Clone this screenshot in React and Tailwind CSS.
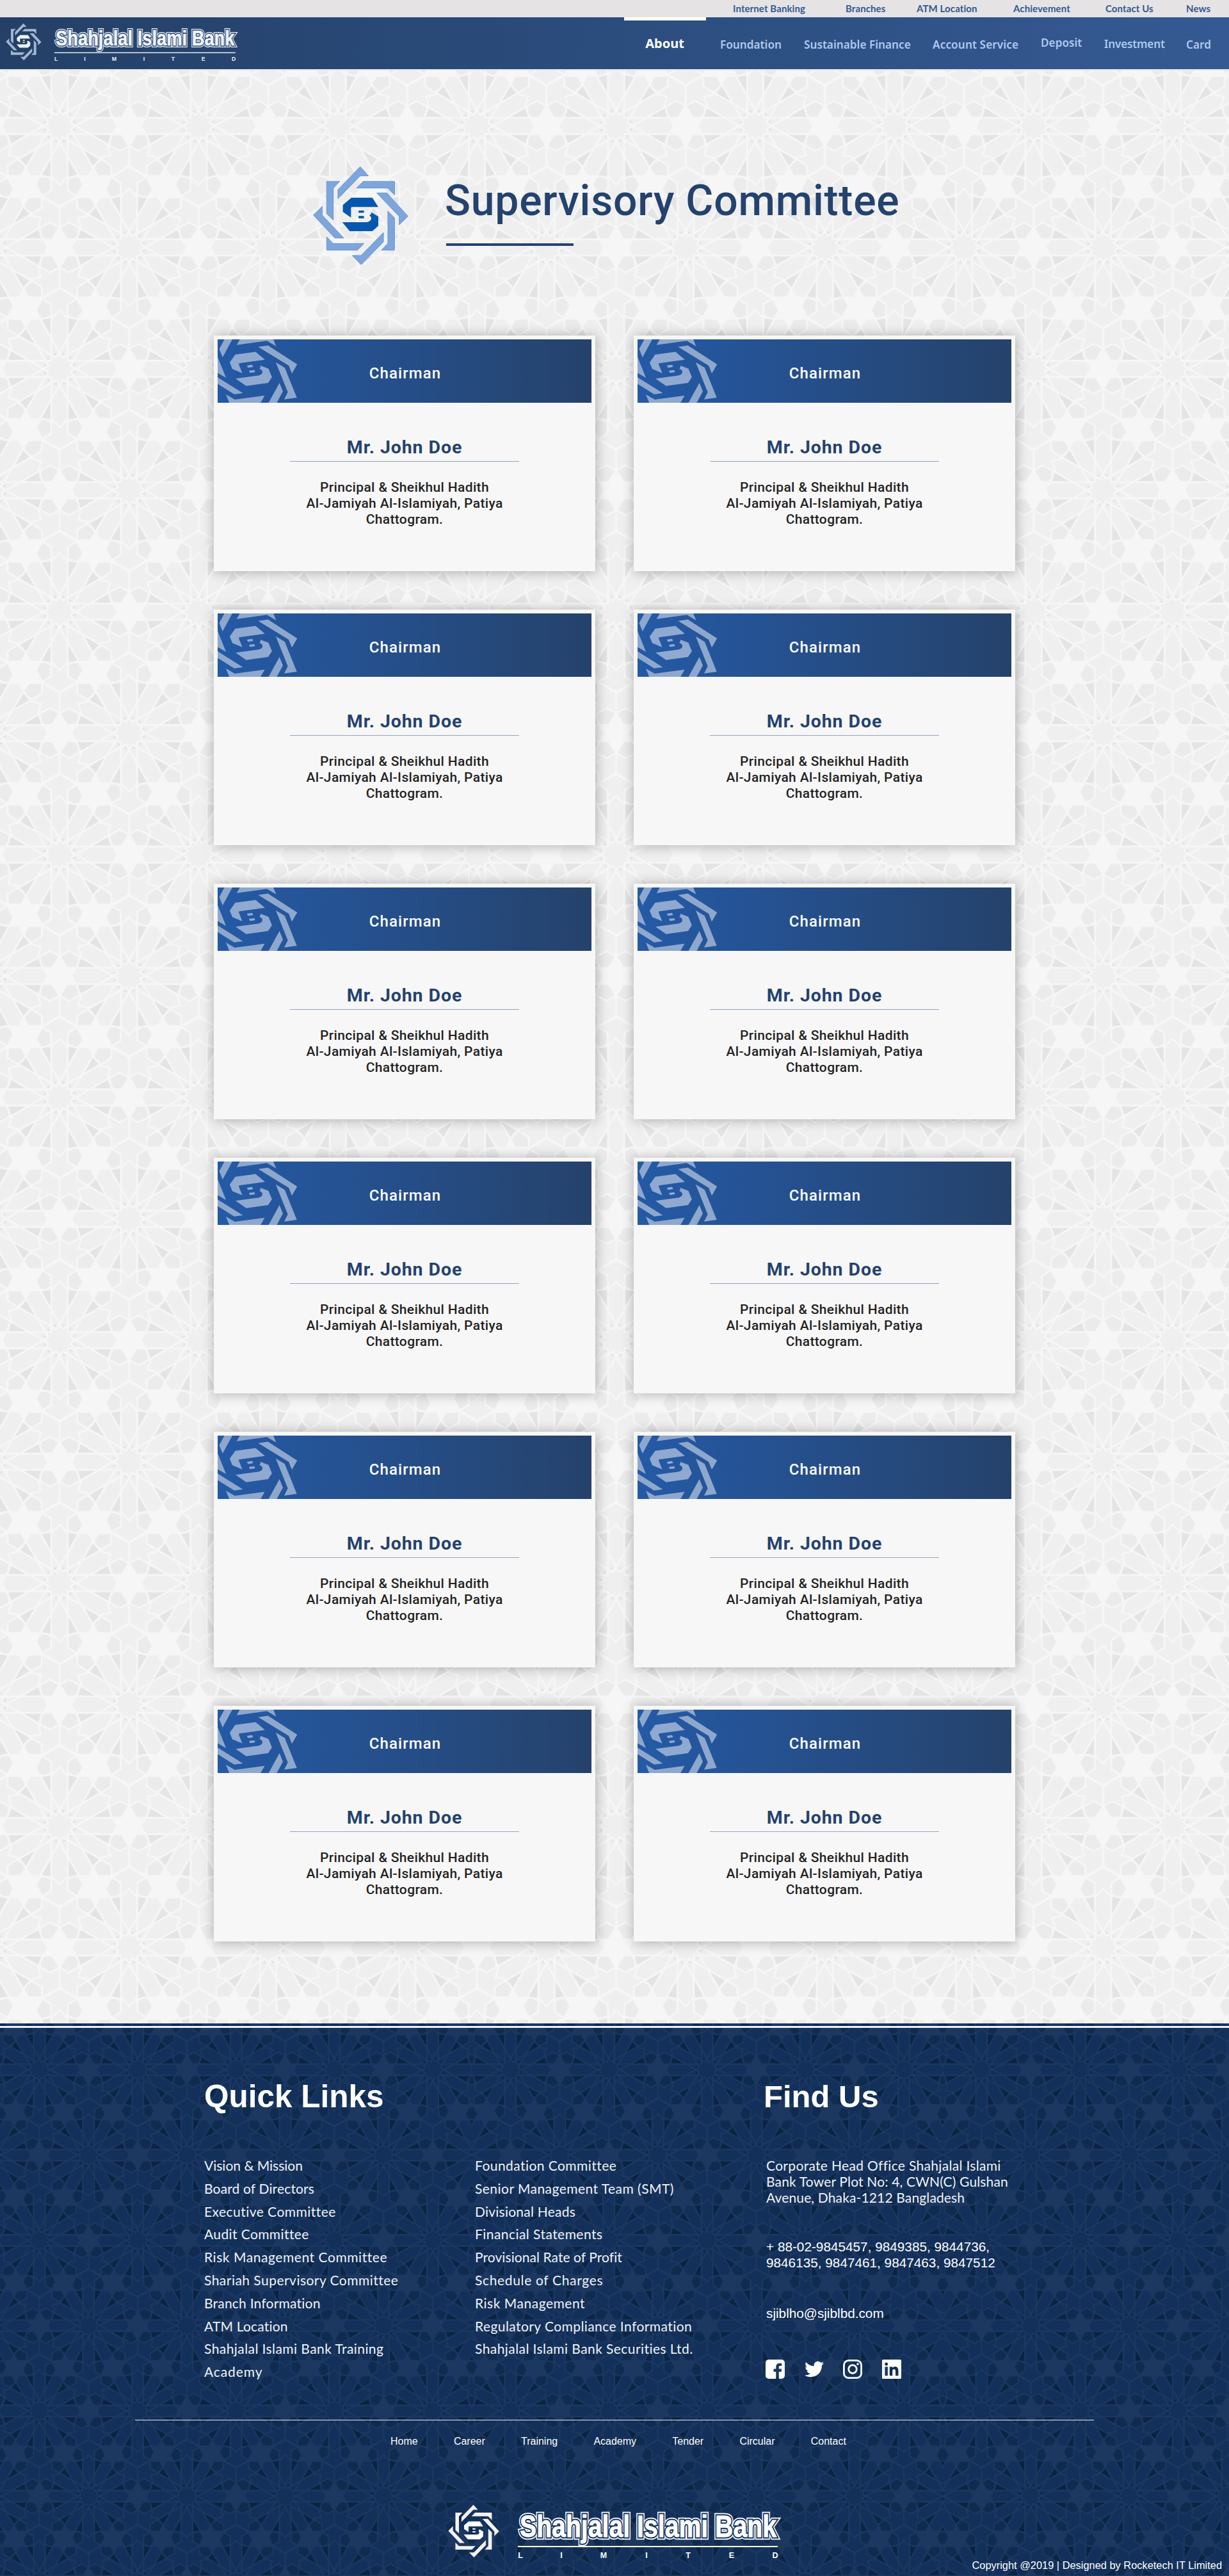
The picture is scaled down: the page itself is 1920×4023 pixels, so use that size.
import { FaTwitter } from 'react-icons/fa';

const SIXTHS = [0, 60, 120, 180, 240, 300];
const TWELFTHS = [0, 30, 60, 90, 120, 150, 180, 210, 240, 270, 300, 330];
const CENTERS = [
  [0, 0],
  [652, 0],
  [0, 1138],
  [652, 1138],
  [326, 569],
];

/* Twelve-fold star lattice used behind the page and the footer. */
function Lattice({ id, transform, base, line, dark, pent }) {
  return (
    <defs>
      <g id={`${id}-fills`}>
        {SIXTHS.map((a) => (
          <g key={a} transform={`rotate(${a})`}>
            <g fill={pent}>
              <path d="M250 38L237 62L235 92L282 117L328 92L306 45Z" />
              <path d="M250 38L237 62L235 92L282 117L328 92L306 45Z" transform="rotate(30) scale(1 -1) rotate(-30)" />
            </g>
            <g fill={dark}>
              <path d="M146 39L238 41L235 60L222 83Z" />
              <path d="M146 39L238 41L235 60L222 83Z" transform="rotate(30) scale(1 -1) rotate(-30)" />
            </g>
          </g>
        ))}
        {TWELFTHS.map((a) => (
          <path key={a} d="M60 16L74 8V24ZM60 16L52 14L58 6Z" fill={dark} transform={`rotate(${a})`} />
        ))}
      </g>
      <g id={`${id}-lines`} fill="none" stroke={line} strokeWidth="9">
        {TWELFTHS.map((a) => (
          <path key={a} d="M38 38H250M38 -38H250" transform={`rotate(${a})`} />
        ))}
        {SIXTHS.map((a) => (
          <g key={a} transform={`rotate(${a})`}>
            <path d="M250 38L237 62L235 92L282 117L328 92M326 92V190" />
            <path d="M250 38L237 62L235 92L282 117L328 92M326 92V190" transform="rotate(30) scale(1 -1) rotate(-30)" />
            <path d="M235 38L276 0L235 -38" transform="rotate(30)" />
            <path
              fill={line}
              stroke="none"
              d="M266 0L242 -43H289L326 -103L363 -43H410L386 0L410 43H363L326 103L289 43H242Z"
            />
          </g>
        ))}
        <circle r="44" fill={base} stroke="none" />
      </g>
      <pattern id={id} width="652" height="1138" patternUnits="userSpaceOnUse" patternTransform={transform}>
        <rect width="652" height="1138" fill={base} />
        {CENTERS.map(([x, y]) => (
          <use key={`f${x}-${y}`} href={`#${id}-fills`} x={x} y={y} />
        ))}
        {CENTERS.map(([x, y]) => (
          <use key={`l${x}-${y}`} href={`#${id}-lines`} x={x} y={y} />
        ))}
      </pattern>
    </defs>
  );
}

function Emblem({ ring, core, outline = 'none', ...rest }) {
  return (
    <g {...rest}>
      <g fill={ring} stroke={outline} strokeWidth="3">
        <path d="M278 31L317 74H278L174 181V139Z" />
        <path d="M292 100H439V163L407 131H261Z" />
        <path d="M356 154H403L502 263L461 303V264Z" />
        <path d="M408 239L439 271V422H378L408 390Z" />
        <path d="M387 340V383L283 490L241 447H282Z" />
        <path d="M121 360L152 391H296L265 422H121Z" />
        <path d="M100 217V258L201 365H159L59 258Z" />
        <path d="M121 100H182L152 132V281L121 251Z" />
      </g>
      <g fill={core}>
        <path d="M237 176H335L363 220H240Q235 220 235 226V269L197 243V210Z" />
        <path d="M194 291H308Q330 287 330 272Q330 264 321 260Q330 254 332 245L363 265V308L335 333H229Z" />
        <rect x="270" y="236" width="26" height="11" rx="3" />
        <rect x="270" y="262" width="26" height="11" rx="3" />
      </g>
    </g>
  );
}

const LETTERS = [
  ['L', 113],
  ['I', 177],
  ['M', 243],
  ['I', 310],
  ['T', 375],
  ['E', 443],
  ['D', 511],
];

function BankLogo({ id, className, ring, ink, gap }) {
  return (
    <svg viewBox="0 0 518 84" preserveAspectRatio="none" className={className}>
      <defs>
        <text
          id={id}
          x="112"
          y="50.5"
          textLength="401"
          lengthAdjust="spacingAndGlyphs"
          className="font-['Liberation_Sans',sans-serif] text-[48px] font-bold"
        >
          Shahjalal Islami Bank
        </text>
      </defs>
      <Emblem ring={ring} core={ink} transform="translate(-10.2 -4.8) scale(0.179)" />
      <use href={`#${id}`} fill={ink} stroke={ink} strokeWidth="8.5" />
      <use href={`#${id}`} fill={gap} stroke={gap} strokeWidth="5" />
      <use href={`#${id}`} fill={ink} stroke={ink} strokeWidth="0.8" />
      <rect x="109" y="65" width="406" height="2" fill={ink} />
      {LETTERS.map(([l, x]) => (
        <text
          key={x}
          x={x}
          y="83.5"
          fill={ink}
          textAnchor="middle"
          className="font-['Liberation_Sans',sans-serif] text-[12.5px] font-bold"
        >
          {l}
        </text>
      ))}
    </svg>
  );
}

const topLinks = [
  ['Internet Banking', 'w-[176px]'],
  ['Branches', 'w-[111px]'],
  ['ATM Location', 'w-[151px]'],
  ['Achievement', 'w-[144px]'],
  ['Contact Us', 'w-[126px]'],
  ['News', 'w-[67px]'],
];

const navLinks = [
  ['Foundation', 'w-[131px] mt-0.5'],
  ['Sustainable Finance', 'w-[201px] mt-0.5'],
  ['Account Service', 'w-[169px] mt-0.5 tracking-[0.1px]'],
  ['Deposit', 'w-[99px] -mt-px'],
  ['Investment', 'w-[128px] mt-px tracking-[-0.2px]'],
  ['Card', 'w-[67px] mt-0.5'],
];

function Header() {
  return (
    <header className="relative border-b-2 border-[#e9e9e9]">
      <nav className="flex h-[27px] justify-end bg-[#e5e3e4] font-[Lato,sans-serif] text-[15px] leading-[27px] font-bold tracking-[0.1px] whitespace-nowrap text-[#35588f]">
        {topLinks.map(([label, cls]) => (
          <a key={label} className={cls}>
            {label}
          </a>
        ))}
      </nav>
      <div className="flex h-[81px] items-start bg-linear-to-r from-[#244067] via-[#2b4d7e] to-[#355a93]">
        <BankLogo
          id="wordmark-top"
          className="mt-[9px] ml-[9px] h-[59px] w-[361px] overflow-visible"
          ring="#a3b7d3"
          ink="#eff4fb"
          gap="#25426a"
        />
        <div className="ml-auto flex font-['Noto_Sans',sans-serif] text-[17.2px] leading-[81px] font-semibold whitespace-nowrap text-[#afc9ef]">
          <a className="mr-[22px] flex h-[81px] w-32 flex-col items-center text-xl font-bold text-white">
            <span className="h-[5px] w-full bg-white" />
            <span className="-mt-[5px] pr-px leading-[81px]">About</span>
          </a>
          {navLinks.map(([label, cls]) => (
            <a key={label} className={cls}>
              {label}
            </a>
          ))}
        </div>
      </div>
    </header>
  );
}

function Card() {
  return (
    <article className="flex h-[368px] flex-col items-center bg-[#f7f7f7] p-1.5 font-[Roboto,sans-serif] shadow-[1px_1px_18px_rgba(0,0,0,0.3)]">
      <div className="relative flex h-[99px] w-full items-center justify-center overflow-hidden bg-linear-to-r from-[#245aa6] to-[#25426b]">
        <svg className="absolute inset-0 h-full w-full" viewBox="0 0 584 99">
          <g transform="matrix(0.972 -0.133 0.374 0.929 51.4 47.3)">
            <Emblem ring="#8ea8cd" core="#8fa9d1" transform="scale(0.3333) translate(-279 -258)" />
          </g>
        </svg>
        <h3 className="relative pt-1.5 pl-0.5 text-[24px] leading-7 font-medium tracking-[1.1px] text-white">Chairman</h3>
      </div>
      <h2 className="mt-[52px] text-[28.5px] leading-9 font-bold tracking-[0.9px] text-[#24426e]">Mr. John Doe</h2>
      <div className="mt-[3px] h-px w-[358px] bg-[#94a3c0]" />
      <p className="mt-7 text-center text-[21px] leading-[25px] font-medium tracking-[0.35px] text-[#222222]">
        Principal &amp; Sheikhul Hadith
        <br />
        Al-Jamiyah Al-Islamiyah, Patiya
        <br />
        Chattogram.
      </p>
    </article>
  );
}

const quickA = [
  ['Vision & Mission', 'tracking-[0px]'],
  ['Board of Directors', 'tracking-[0.15px]'],
  ['Executive Committee', 'tracking-[0.46px]'],
  ['Audit Committee', 'tracking-[0.39px]'],
  ['Risk Management Committee', 'tracking-[0.56px]'],
  ['Shariah Supervisory Committee', 'tracking-[0.47px]'],
  ['Branch Information', 'tracking-[0.22px]'],
  ['ATM Location', 'tracking-[0.18px]'],
  ['Shahjalal Islami Bank Training', 'tracking-[0.43px]'],
  ['Academy', 'tracking-[0.9px]'],
];

const quickB = [
  ['Foundation Committee', 'tracking-[0.44px]'],
  ['Senior Management Team (SMT)', 'tracking-[0.46px]'],
  ['Divisional Heads', 'tracking-[0.23px]'],
  ['Financial Statements', 'tracking-[0.45px]'],
  ['Provisional Rate of Profit', 'tracking-[0.07px]'],
  ['Schedule of Charges', 'tracking-[0.66px]'],
  ['Risk Management', 'tracking-[0.52px]'],
  ['Regulatory Compliance Information', 'tracking-[0.43px]'],
  ['Shahjalal Islami Bank Securities Ltd.', 'tracking-[0.43px]'],
];

function LinkList({ items }) {
  return (
    <ul className="w-[423px] font-[Lato,sans-serif] text-[21px] leading-[35.8px] whitespace-nowrap text-[#f1f3f6]">
      {items.map(([label, cls]) => (
        <li key={label} className={cls}>
          {label}
        </li>
      ))}
    </ul>
  );
}

function Social() {
  return (
    <div className="mt-[60px] flex gap-[30.5px] text-white">
      <svg className="size-[30px]" viewBox="0 0 30 30" fill="currentColor">
        <path d="M5 0H25A5 5 0 0 1 30 5V25A5 5 0 0 1 25 30H20.8V19H24.6L25.2 14.6H20.8V12C20.8 10.6 21.4 9.8 23 9.8H25.3V6C24.6 5.9 23.3 5.8 22 5.8C18.6 5.8 16.3 7.8 16.3 11.5V14.6H12.5V19H16.3V30H5A5 5 0 0 1 0 25V5A5 5 0 0 1 5 0Z" />
      </svg>
      <FaTwitter className="size-[30px]" />
      <svg className="size-[30px]" viewBox="0 0 30 30" fill="none" stroke="currentColor">
        <rect x="1.4" y="1.4" width="27.2" height="27.2" rx="7.4" strokeWidth="2.8" />
        <circle cx="15" cy="15" r="6.3" strokeWidth="2.8" />
        <circle cx="23" cy="7" r="1.8" fill="currentColor" stroke="none" />
      </svg>
      <svg className="size-[30px]" viewBox="0 0 30 30" fill="currentColor" fillRule="evenodd">
        <path d="M1.5 0H28.5A1.5 1.5 0 0 1 30 1.5V28.5A1.5 1.5 0 0 1 28.5 30H1.5A1.5 1.5 0 0 1 0 28.5V1.5A1.5 1.5 0 0 1 1.5 0ZM4.4 11.3V25.3H8.9V11.3ZM6.65 4.4A2.5 2.5 0 1 0 6.65 9.4A2.5 2.5 0 1 0 6.65 4.4ZM11.8 11.3V25.3H16.2V18.3C16.2 16.4 17 15 18.8 15C20.5 15 21 16.4 21 18.3V25.3H25.5V17.4C25.5 13.5 23.8 11 20.3 11C18.2 11 16.8 12 16.1 13.2V11.3Z" />
      </svg>
    </div>
  );
}

function Footer() {
  return (
    <footer className="relative h-[863px] overflow-hidden bg-[#12305a]">
      <svg className="absolute inset-0 h-full w-full">
        <Lattice
          id="lattice-navy"
          transform="translate(61.5 72.4) scale(0.2356 0.2341)"
          base="#12305a"
          line="#1c3861"
          dark="#0a2443"
          pent="#0f2b50"
        />
        <rect width="736" height="863" fill="url(#lattice-navy)" />
        <rect width="736" height="863" fill="url(#lattice-navy)" transform="translate(736 0)" />
        <rect width="448" height="863" fill="url(#lattice-navy)" transform="translate(1472 0)" />
      </svg>
      <div className="relative flex flex-col">
        <div className="mt-1 h-[3px] bg-[#f3f1f6]" />
        <div className="mt-[82px] flex h-[473px] pl-[319px]">
          <section className="w-[874px]">
            <h2 className="font-['Liberation_Sans',sans-serif] text-[49.5px] leading-[50px] font-bold text-white">Quick Links</h2>
            <div className="mt-[65px] flex">
              <LinkList items={quickA} />
              <LinkList items={quickB} />
            </div>
          </section>
          <section className="whitespace-nowrap text-white">
            <h2 className="font-['Liberation_Sans',sans-serif] text-[49px] leading-[50px] font-bold">Find Us</h2>
            <div className="pl-[4px]">
              <p className="mt-[70px] font-[Lato,sans-serif] text-[21px] leading-[25px] text-[#f1f3f6]">
                <span className="block tracking-[0.32px]">Corporate Head Office Shahjalal Islami</span>
                <span className="block tracking-[0.16px]">Bank Tower Plot No: 4, CWN(C) Gulshan</span>
                <span className="block tracking-[0.14px]">Avenue, Dhaka-1212 Bangladesh</span>
              </p>
              <div className="font-['Liberation_Sans',sans-serif] text-[20.75px] leading-[25px]">
                <p className="mt-[52px]">
                  + 88-02-9845457, 9849385, 9844736,
                  <br />
                  9846135, 9847461, 9847463, 9847512
                </p>
                <p className="mt-[54px]">sjiblho@sjiblbd.com</p>
              </div>
            </div>
            <div className="pl-[3px]">
              <Social />
            </div>
          </section>
        </div>
        <div className="mt-[57px] mr-[211px] ml-[211px] h-px bg-[#e8ebf0]" />
        <nav className="mt-[21px] flex gap-[56.2px] pl-[610px] font-['Liberation_Sans',sans-serif] text-base text-white">
          {['Home', 'Career', 'Training', 'Academy', 'Tender', 'Circular', 'Contact'].map((label) => (
            <a key={label}>{label}</a>
          ))}
        </nav>
        <BankLogo
          id="wordmark-bottom"
          className="mt-[86px] ml-[700px] h-[84px] w-[518px] overflow-visible"
          ring="#f4f1f0"
          ink="#ffffff"
          gap="#12305a"
        />
        <p className="mt-px pr-[11px] text-right font-['Liberation_Sans',sans-serif] text-[16.4px] leading-5 text-white">
          Copyright @2019 | Designed by Rocketech IT Limited
        </p>
      </div>
    </footer>
  );
}

export default function App() {
  return (
    <div className="w-[1920px] bg-[#eeeeee]">
      <Header />
      <main className="relative h-[3050px] overflow-hidden">
        <svg className="absolute inset-0 h-full w-full">
          <Lattice
            id="lattice-light"
            transform="translate(93 86.7) scale(0.3334 0.3333)"
            base="#efefef"
            line="#f6f6f6"
            dark="#e4e4e4"
            pent="#ebebeb"
          />
          <rect width="1920" height="3050" fill="url(#lattice-light)" />
        </svg>
        <div className="relative">
          <div className="flex h-[414px] items-start pt-[140px] pl-[470px]">
            <svg className="size-[180px]" viewBox="0 0 540 540">
              <Emblem ring="#7fa6da" core="#0558ad" outline="#5f93da" />
            </svg>
            <div className="mt-[31px] ml-[43px]">
              <h1 className="pl-0.5 font-[Roboto,sans-serif] text-[66px] leading-[66px] font-medium tracking-[0.8px] text-[#24426e]">
                Supervisory Committee
              </h1>
              <div className="mt-[33px] ml-1 h-1 w-[199px] bg-[#24426e]" />
            </div>
          </div>
          <div className="grid grid-cols-[596px_596px] gap-[60px] pl-[334px]">
            {Array.from({ length: 12 }, (_, i) => (
              <Card key={i} />
            ))}
          </div>
        </div>
      </main>
      <Footer />
    </div>
  );
}
